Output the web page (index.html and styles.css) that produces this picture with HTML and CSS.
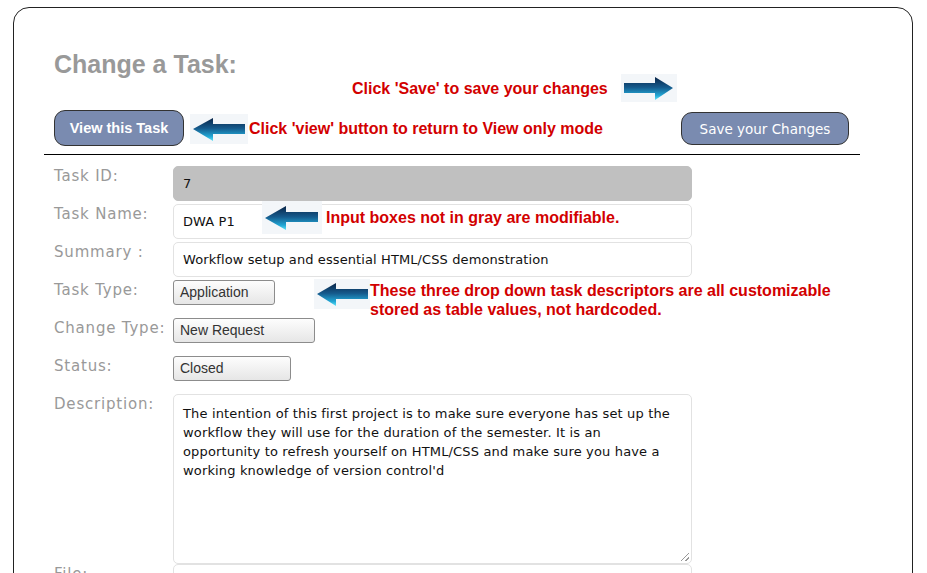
FILE: index.html
```html
<!DOCTYPE html>
<html>
<head>
<meta charset="utf-8">
<title>Change a Task</title>
<link rel="stylesheet" href="styles.css">
</head>
<body>
<svg width="0" height="0" class="defs">
  <defs>
    <linearGradient id="ag" x1="0" y1="0" x2="0" y2="1">
      <stop offset="0" stop-color="#0a2548"/>
      <stop offset="0.45" stop-color="#155a8c"/>
      <stop offset="0.8" stop-color="#22a6d4"/>
      <stop offset="1" stop-color="#5ee3f7"/>
    </linearGradient>
  </defs>
</svg>
<div class="frame">
  <div class="head">
    <h1 class="title">Change a Task:</h1>
    <div class="note-row">
      <span class="note">Click 'Save' to save your changes</span>
      <svg class="arrow" width="56" height="28" viewBox="0 0 56 28"><rect width="56" height="28" fill="#f3f6f9"/><polygon points="52,14 34,3 34,9 3,9 3,19 34,19 34,26" fill="url(#ag)"/></svg>
    </div>
    <div class="action-row">
      <div class="left-actions">
        <button class="btn btn-view">View this Task</button>
        <svg class="arrow" width="58" height="30" viewBox="0 0 58 30"><rect width="58" height="30" fill="#f3f6f9"/><polygon points="3,15 23,4 23,10 55,10 55,20 23,20 23,27" fill="url(#ag)"/></svg>
        <span class="note">Click 'view' button to return to View only mode</span>
      </div>
      <button class="btn btn-save">Save your Changes</button>
    </div>
  </div>
  <hr class="rule">
  <div class="form">
    <label class="lbl">Task ID:</label>
    <div class="ctl"><div class="inp inp-ro">7</div></div>

    <label class="lbl">Task Name:</label>
    <div class="ctl">
      <div class="inp">DWA P1</div>
      <div class="anno anno-name">
        <svg class="arrow" width="60" height="33" viewBox="0 0 60 33"><rect width="60" height="33" fill="#f3f6f9"/><polygon points="3,17 24,5 24,11 56,11 56,21 24,21 24,29" fill="url(#ag)"/></svg>
        <span class="note">Input boxes not in gray are modifiable.</span>
      </div>
    </div>

    <label class="lbl">Summary :</label>
    <div class="ctl"><div class="inp">Workflow setup and essential HTML/CSS demonstration</div></div>

    <label class="lbl">Task Type:</label>
    <div class="ctl">
      <div class="sel sel-type">Application</div>
      <div class="anno anno-type">
        <svg class="arrow" width="56" height="30" viewBox="0 0 56 30"><rect width="56" height="30" fill="#f3f6f9"/><polygon points="3,15 22,4 22,10 54,10 54,20 22,20 22,27" fill="url(#ag)"/></svg>
        <span class="note note-wrap">These three drop down task descriptors are all customizable<br>stored as table values, not hardcoded.</span>
      </div>
    </div>

    <label class="lbl">Change Type:</label>
    <div class="ctl"><div class="sel sel-change">New Request</div></div>

    <label class="lbl">Status:</label>
    <div class="ctl"><div class="sel sel-status">Closed</div></div>

    <label class="lbl">Description:</label>
    <div class="ctl"><div class="txt">The intention of this first project is to make sure everyone has set up the<br>workflow they will use for the duration of the semester. It is an<br>opportunity to refresh yourself on HTML/CSS and make sure you have a<br>working knowledge of version control'd<span class="grip"></span></div></div>

    <label class="lbl">File:</label>
    <div class="ctl"><div class="inp"></div></div>
  </div>
</div>
</body>
</html>
```

FILE: styles.css
```css
html, body {
  margin: 0;
  padding: 0;
  background: #fff;
  overflow: hidden;
}
.defs {
  position: absolute;
  width: 0;
  height: 0;
}
.frame {
  margin: 7px 14px 0 13px;
  border: 1px solid #222;
  border-radius: 16px;
  padding: 0 0 40px 30px;
  height: 640px;
}
.head {
  width: 806px;
  padding: 42px 0 0 10px;
}
.title {
  margin: 0;
  font: bold 25px/28px "Liberation Sans", Arial, sans-serif;
  color: #999;
}
.note {
  font: bold 16px/19px "Liberation Sans", Arial, sans-serif;
  color: #d20000;
  white-space: nowrap;
}
.arrow {
  display: block;
  flex: none;
}
.note-row {
  display: flex;
  align-items: center;
  gap: 13px;
  margin: -4px 0 0 298px;
  height: 28px;
}
.action-row {
  display: flex;
  justify-content: space-between;
  align-items: flex-start;
  margin-top: 8px;
  padding-right: 11px;
}
.left-actions {
  display: flex;
  align-items: center;
  gap: 0;
}
.left-actions .arrow {
  margin: 2px 1px 0 6px;
}
.btn {
  background: #7a8bb0;
  border: 1px solid #333;
  border-radius: 11px;
  color: #fff;
  padding: 0;
  margin: 0;
}
.btn-view {
  width: 130px;
  height: 36px;
  font: bold 14.5px "Liberation Sans", Arial, sans-serif;
}
.btn-save {
  width: 168px;
  height: 33px;
  margin-top: 2px;
  font: 13.5px "DejaVu Sans", Verdana, sans-serif;
}
.rule {
  width: 816px;
  margin: 8px 0 0 0;
  border: 0;
  border-top: 1px solid #000;
  height: 0;
}
.form {
  display: grid;
  grid-template-columns: 119px 519px;
  grid-auto-rows: minmax(38px, auto);
  align-items: start;
  padding: 11px 0 0 10px;
}
.lbl {
  font: 15px/18px "DejaVu Sans", Verdana, sans-serif;
  letter-spacing: 0.8px;
  color: #999;
  white-space: nowrap;
  padding-top: 1px;
}
.ctl {
  position: relative;
}
.inp {
  box-sizing: border-box;
  height: 35px;
  border: 1px solid #e2e2e2;
  border-radius: 5px;
  padding: 0 9px;
  font: 13px/33px "DejaVu Sans", Verdana, sans-serif;
  letter-spacing: 0.1px;
  color: #111;
  background: #fff;
}
.inp-ro {
  background: #c0c0c0;
  border-color: #c0c0c0;
}
.sel {
  box-sizing: border-box;
  height: 25px;
  border: 1px solid #8c8c8c;
  border-radius: 3px;
  background: linear-gradient(#fdfdfd, #e6e6e6);
  padding: 0 6px;
  font: 14px/23px "Liberation Sans", Arial, sans-serif;
  color: #333;
}
.sel-type { width: 102px; }
.sel-change { width: 142px; }
.sel-status { width: 118px; }
.txt {
  position: relative;
  box-sizing: border-box;
  height: 170px;
  border: 1px solid #e2e2e2;
  border-radius: 5px;
  padding: 9px 9px;
  font: 13px/19px "DejaVu Sans", Verdana, sans-serif;
  letter-spacing: 0.15px;
  white-space: nowrap;
  overflow: hidden;
  color: #111;
}
.grip {
  position: absolute;
  right: 2px;
  bottom: 2px;
  width: 8px;
  height: 8px;
  background: linear-gradient(135deg, transparent 45%, #999 45%, #999 55%, transparent 55%, transparent 75%, #999 75%, #999 85%, transparent 85%);
}
.anno {
  position: absolute;
  display: flex;
  align-items: flex-start;
}
.anno-name {
  left: 89px;
  top: -3px;
  align-items: center;
  gap: 4px;
}
.anno-type {
  left: 141px;
  top: -1px;
  gap: 0;
}
.note-wrap {
  padding-top: 2px;
}
```
